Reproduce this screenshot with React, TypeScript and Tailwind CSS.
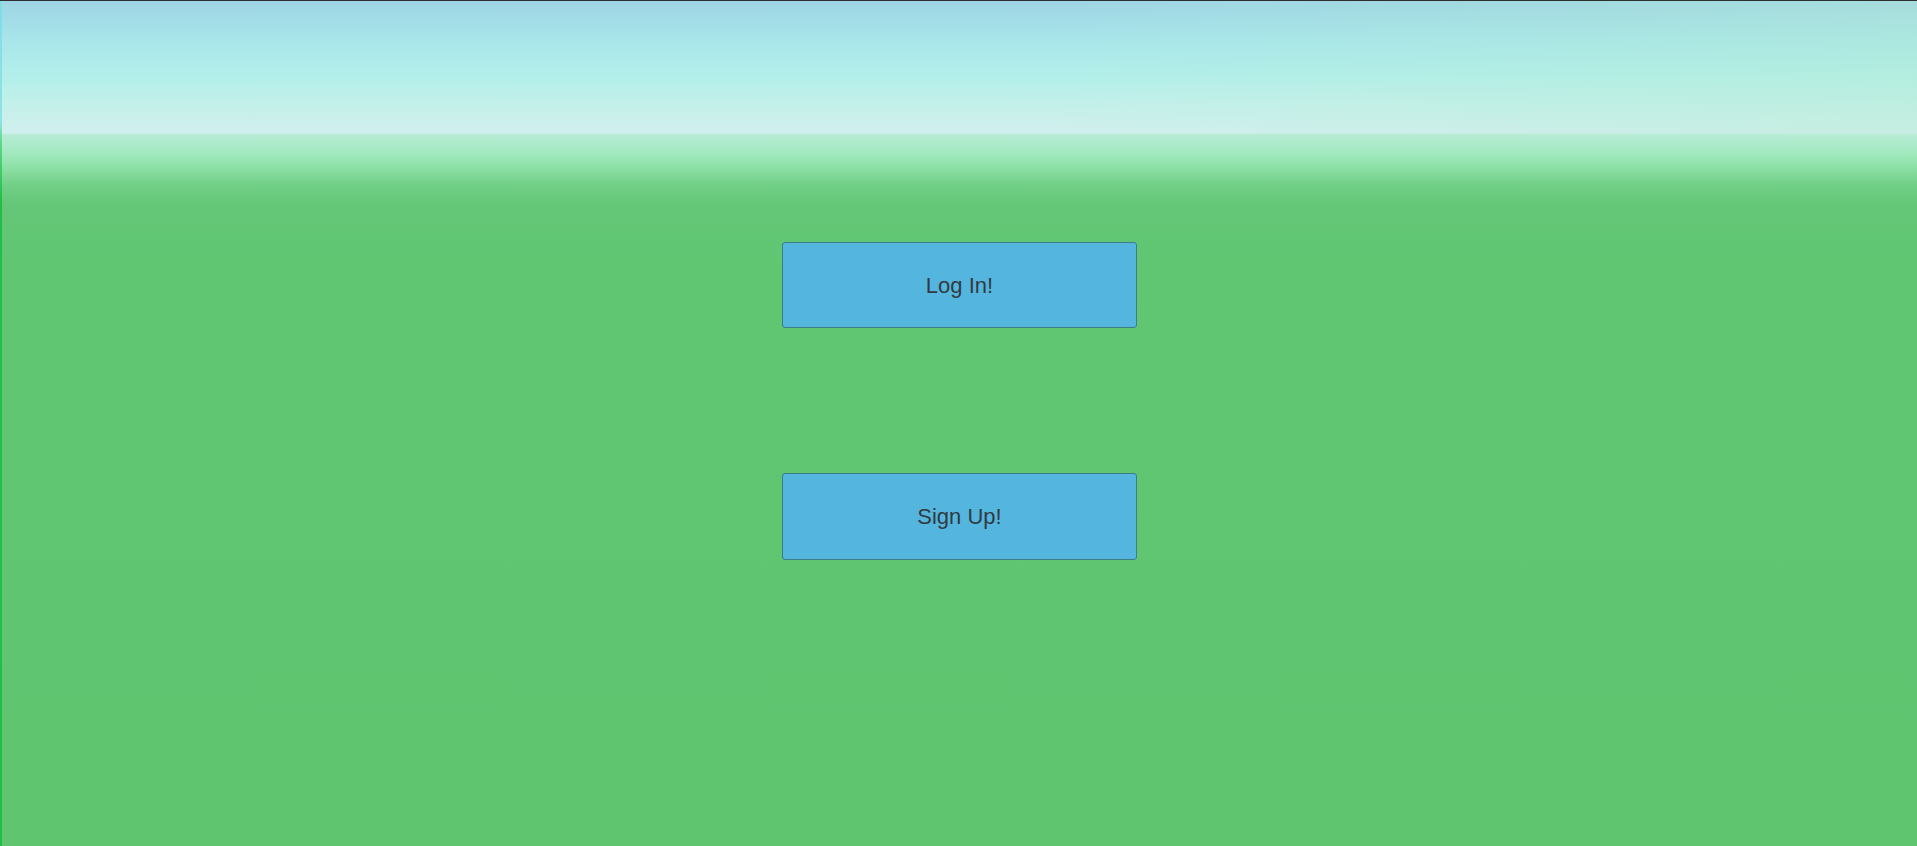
export default function App() {
  return (
    <div className="flex h-[846px] w-full overflow-hidden border-t border-[#2e2e2e] font-['Liberation_Sans',Arial,sans-serif]">
      {/* left edge strip */}
      <div className="w-[2px] shrink-0 bg-[linear-gradient(to_bottom,#7fdde6_0px,#8ee4e4_120px,#63d98a_140px,#1fbf48_200px,#1fbf48_100%)]" />

      {/* scene */}
      <div className="relative flex-1 bg-[linear-gradient(to_bottom,#9ed5e5_0px,#a8e6ea_40px,#b3efea_75px,#c4f0ea_105px,#d1efee_132px,#b6ebd4_134px,#a4eac2_150px,#92e3ac_163px,#72d088_183px,#64c778_203px,#60c672_260px,#5fc56f_100%)]">
        <div className="absolute inset-x-0 top-0 h-[134px] bg-[linear-gradient(to_right,transparent_0%,transparent_55%,rgba(180,235,205,0.35)_100%)]" />
        <div className="relative flex flex-col items-center pt-[241px] gap-[145px]">
          <button className="flex h-[86px] w-[355px] items-center justify-center rounded-[3px] border border-[#3e7d86] bg-[#54b6df] text-[22px] text-[#323a3f]">
            Log In!
          </button>
          <button className="flex h-[87px] w-[355px] items-center justify-center rounded-[3px] border border-[#3e7d86] bg-[#54b6df] text-[22px] text-[#323a3f]">
            Sign Up!
          </button>
        </div>
      </div>
    </div>
  );
}
